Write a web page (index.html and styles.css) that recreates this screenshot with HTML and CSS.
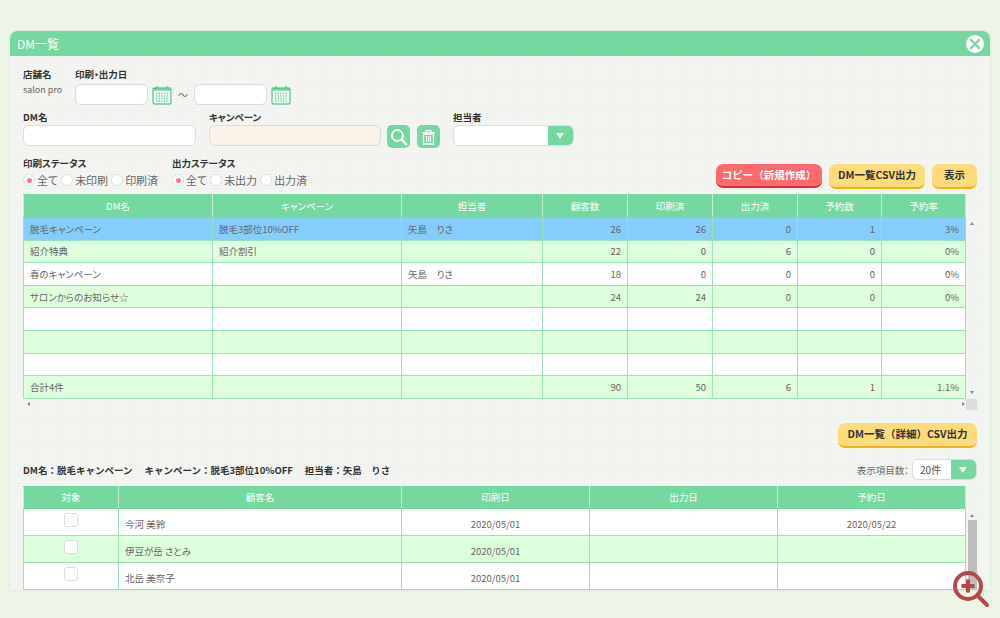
FILE: index.html
```html
<!DOCTYPE html>
<html lang="ja">
<head>
    <meta charset="UTF-8">
    <title>DM一覧</title>
    <link rel="stylesheet" href="styles.css">
</head>
<body>
    <svg class="defs" width="0" height="0">
        <symbol id="cal" viewBox="0 0 20 20">
            <rect x="1" y="3" width="18" height="16" rx="1.5" fill="#fff" stroke="#5fd193" stroke-width="1.4"/>
            <rect x="1" y="3" width="18" height="2.500" fill="#5fd193"/>
            <rect x="4" y="1" width="2" height="4" rx="1" fill="#5fd193"/>
            <rect x="14" y="1" width="2" height="4" rx="1" fill="#5fd193"/>
            <path d="M4 8.500h12M4 11h12M4 13.500h12M4 16h12" stroke="#5fd193" stroke-width="1.3" stroke-dasharray="1.4 1.2"/>
        </symbol>
    </svg>
    <div class="panel">
        <div class="titlebar">
            <span>DM一覧</span>
            <div class="close">
                <svg width="18" height="18" viewBox="0 0 18 18"><circle cx="9" cy="9" r="9" fill="#fff"/><path d="M5 5l8 8M13 5l-8 8" stroke="#74d8a0" stroke-width="2.4" stroke-linecap="round"/></svg>
            </div>
        </div>
        <div class="content">
            <div class="row row1">
                <div class="shop">
                    <div class="label">店舗名</div>
                    <div class="shopname">salon pro</div>
                </div>
                <div class="dates">
                    <div class="label">印刷・出力日</div>
                    <div class="daterow">
                        <input class="field w73" type="text">
                        <svg class="calicon" width="20" height="20"><use href="#cal"/></svg>
                        <span class="tilde">～</span>
                        <input class="field w73" type="text">
                        <svg class="calicon" width="20" height="20"><use href="#cal"/></svg>
                    </div>
                </div>
            </div>
            <div class="row row2">
                <div class="block">
                    <div class="label">DM名</div>
                    <input class="field w173" type="text">
                </div>
                <div class="block">
                    <div class="label">キャンペーン</div>
                    <div class="camprow">
                        <input class="field w172 readonly" type="text">
                        <div class="iconbtn first">
                            <svg width="18" height="18" viewBox="0 0 17 17"><circle cx="7" cy="7" r="5.2" fill="none" stroke="#fff" stroke-width="1.7"/><path d="M10.8 10.8l4.6 4.6" stroke="#fff" stroke-width="2.2" stroke-linecap="round"/></svg>
                        </div>
                        <div class="iconbtn">
                            <svg width="15" height="16" viewBox="0 0 15 16"><path d="M1 3.500h13M5 3V1.500h5V3" fill="none" stroke="#fff" stroke-width="1.2"/><path d="M2.500 5h10v10h-10z" fill="none" stroke="#fff" stroke-width="1.3"/><path d="M5.500 7v6M7.500 7v6M9.500 7v6" stroke="#fff" stroke-width="1.1"/></svg>
                        </div>
                    </div>
                </div>
                <div class="block staff">
                    <div class="label">担当者</div>
                    <div class="select w121">
                        <div class="selectval"></div>
                        <div class="selectarrow"></div>
                    </div>
                </div>
            </div>
            <div class="row row3">
                <div class="status">
                    <div class="label">印刷ステータス</div>
                    <div class="radios">
                        <span class="radio on"></span><span class="radiotxt">全て</span>
                        <span class="radio"></span><span class="radiotxt">未印刷</span>
                        <span class="radio"></span><span class="radiotxt">印刷済</span>
                    </div>
                </div>
                <div class="status">
                    <div class="label">出力ステータス</div>
                    <div class="radios">
                        <span class="radio on"></span><span class="radiotxt">全て</span>
                        <span class="radio"></span><span class="radiotxt">未出力</span>
                        <span class="radio"></span><span class="radiotxt">出力済</span>
                    </div>
                </div>
                <div class="buttons">
                    <div class="btn red">コピー（新規作成）</div>
                    <div class="btn yellow w96">DM一覧CSV出力</div>
                    <div class="btn yellow w45">表示</div>
                </div>
            </div>

            <div class="tablewrap">
                <table class="grid top">
                    <colgroup>
                        <col class="c189"><col class="c189"><col class="c141"><col class="c85"><col class="c85"><col class="c85"><col class="c84"><col class="c84">
                    </colgroup>
                    <thead>
                        <tr><th>DM名</th><th>キャンペーン</th><th>担当者</th><th>顧客数</th><th>印刷済</th><th>出力済</th><th>予約数</th><th>予約率</th></tr>
                    </thead>
                    <tbody>
                        <tr class="sel"><td>脱毛キャンペーン</td><td>脱毛3部位10%OFF</td><td>矢島　りさ</td><td class="num">26</td><td class="num">26</td><td class="num">0</td><td class="num">1</td><td class="num">3%</td></tr>
                        <tr class="alt"><td>紹介特典</td><td>紹介割引</td><td></td><td class="num">22</td><td class="num">0</td><td class="num">6</td><td class="num">0</td><td class="num">0%</td></tr>
                        <tr><td>春のキャンペーン</td><td></td><td>矢島　りさ</td><td class="num">18</td><td class="num">0</td><td class="num">0</td><td class="num">0</td><td class="num">0%</td></tr>
                        <tr class="alt"><td>サロンからのお知らせ☆</td><td></td><td></td><td class="num">24</td><td class="num">24</td><td class="num">0</td><td class="num">0</td><td class="num">0%</td></tr>
                        <tr><td></td><td></td><td></td><td></td><td></td><td></td><td></td><td></td></tr>
                        <tr class="alt"><td></td><td></td><td></td><td></td><td></td><td></td><td></td><td></td></tr>
                        <tr><td></td><td></td><td></td><td></td><td></td><td></td><td></td><td></td></tr>
                        <tr class="alt"><td>合計4件</td><td></td><td></td><td class="num">90</td><td class="num">50</td><td class="num">6</td><td class="num">1</td><td class="num">1.1%</td></tr>
                    </tbody>
                </table>
                <div class="vscroll">
                    <span class="arrow up"></span>
                    <span class="arrow down"></span>
                </div>
            </div>
            <div class="hscroll">
                <span class="arrow left"></span>
                <span class="arrow right"></span>
                <span class="corner"></span>
            </div>

            <div class="row detailbtn">
                <div class="btn yellow">DM一覧（詳細）CSV出力</div>
            </div>
            <div class="row inforow">
                <div class="info">
                    <span>DM名：脱毛キャンペーン</span>
                    <span>キャンペーン：脱毛3部位10%OFF</span>
                    <span>担当者：矢島　りさ</span>
                </div>
                <div class="perpage">
                    <span>表示項目数：</span>
                    <div class="select w65">
                        <div class="selectval">20件</div>
                        <div class="selectarrow"></div>
                    </div>
                </div>
            </div>
            <div class="tablewrap">
                <table class="grid bottom">
                    <colgroup>
                        <col class="c95"><col class="c283"><col class="c188"><col class="c188"><col class="c188">
                    </colgroup>
                    <thead>
                        <tr><th>対象</th><th>顧客名</th><th>印刷日</th><th>出力日</th><th>予約日</th></tr>
                    </thead>
                    <tbody>
                        <tr><td class="mid chk"><span class="check"></span></td><td class="name">今河 美鈴</td><td class="mid">2020/05/01</td><td></td><td class="mid">2020/05/22</td></tr>
                        <tr class="alt"><td class="mid chk"><span class="check"></span></td><td class="name">伊豆が岳 さとみ</td><td class="mid">2020/05/01</td><td></td><td></td></tr>
                        <tr><td class="mid chk"><span class="check"></span></td><td class="name">北岳 美奈子</td><td class="mid">2020/05/01</td><td></td><td></td></tr>
                    </tbody>
                </table>
                <div class="vscroll">
                    <span class="arrow up"></span>
                    <span class="thumb"></span>
                </div>
            </div>
        </div>
    </div>
    <div class="zoomer">
        <svg width="38" height="38" viewBox="0 0 38 38"><circle cx="16" cy="16" r="13" fill="none" stroke="#b8474b" stroke-width="4"/><path d="M26 26l9 9" stroke="#b8474b" stroke-width="4" stroke-linecap="round"/><path d="M9.500 16h13M16 9.500v13" stroke="#b8474b" stroke-width="4"/></svg>
    </div>
</body>
</html>
```

FILE: styles.css
```css
* {
    box-sizing: border-box;
}
html, body {
    margin: 0;
    padding: 0;
    height: 618px;
    overflow: hidden;
}
body {
    position: relative;
    padding: 31px 10px 0;
    background-color: #edf5e6;
    font-family: "Noto Sans CJK JP", "Noto Sans", sans-serif;
    font-size: 9.500px;
    font-feature-settings: "palt";
    color: #666;
}
.defs {
    position: absolute;
}
.panel {
    height: 559px;
    overflow: hidden;
    border-radius: 8px 8px 0 0;
    background-color: #f0f2ee;
    background-image: repeating-linear-gradient(0deg, rgba(255, 255, 255, 0.25) 0 1px, transparent 1px 3px), repeating-linear-gradient(90deg, rgba(255, 255, 255, 0.25) 0 1px, transparent 1px 3px);
    box-shadow: 0 0 3px #c9e6c9;
}
.titlebar {
    display: flex;
    justify-content: space-between;
    align-items: center;
    height: 25px;
    padding: 0 6px 0 7px;
    background-color: #74d8a0;
    color: #fff;
    font-size: 12px;
}
.close {
    display: flex;
}
.content {
    padding: 0 13px;
}
.row {
    display: flex;
}
.label {
    height: 14px;
    line-height: 14px;
    font-weight: bold;
    font-size: 9.500px;
    color: #333;
}
.row1 {
    padding-top: 11px;
    height: 54px;
}
.shop {
    width: 52px;
}
.shopname {
    margin-top: 2px;
    font-size: 9px;
    line-height: 14px;
}
.daterow {
    display: flex;
    align-items: center;
    margin-top: 3px;
}
.field {
    display: block;
    height: 21px;
    border: 1px solid #dcdcdc;
    border-radius: 6px;
    background-color: #fff;
    padding: 0;
}
.w73 { width: 73px; }
.w173 { width: 173px; }
.w172 { width: 172px; }
.readonly {
    background-color: #fbf2e8;
}
.calicon {
    margin-left: 4px;
}
.tilde {
    width: 22px;
    text-align: center;
    font-size: 10px;
}
.row2 {
    height: 46px;
}
.block {
    margin-right: 13px;
}
.block .label {
    margin-bottom: 1px;
}
.camprow {
    display: flex;
}
.iconbtn {
    display: flex;
    align-items: center;
    justify-content: center;
    width: 23px;
    height: 23px;
    margin-left: 7px;
    border-radius: 5px;
    background-color: #74d8a0;
}
.iconbtn.first {
    margin-left: 6px;
}
.select {
    display: flex;
    height: 21px;
    border: 1px solid #dcdcdc;
    border-radius: 6px;
    overflow: hidden;
    background-color: #fff;
}
.w121 { width: 121px; }
.w65 { width: 65px; }
.selectval {
    flex: 1;
    line-height: 19px;
    padding-left: 7px;
    font-size: 10px;
    color: #555;
}
.selectarrow {
    position: relative;
    width: 25px;
    background-color: #74d8a0;
}
.selectarrow::after {
    content: "";
    position: absolute;
    left: 8px;
    top: 7px;
    border-left: 4.500px solid transparent;
    border-right: 4.500px solid transparent;
    border-top: 6px solid #fff;
}
.row3 {
    height: 38px;
}
.status {
    width: 149px;
}
.radios {
    display: flex;
    align-items: center;
    margin-top: 3px;
    height: 14px;
}
.radio {
    position: relative;
    display: inline-block;
    width: 12px;
    height: 12px;
    margin-right: 2px;
    border: 1px solid #e0e0e0;
    border-radius: 50%;
    background-color: #fff;
}
.radio.on::after {
    content: "";
    position: absolute;
    left: 2.500px;
    top: 2.500px;
    width: 5px;
    height: 5px;
    border-radius: 50%;
    background-color: #fb7a85;
}
.radiotxt {
    margin-right: 3px;
    font-size: 11px;
}
.buttons {
    display: flex;
    gap: 7px;
    margin-left: auto;
    margin-top: 8px;
}
.btn {
    height: 25px;
    line-height: 22px;
    padding: 0;
    border-radius: 7px;
    font-weight: bold;
    font-size: 10.500px;
    font-feature-settings: normal;
    text-align: center;
    white-space: nowrap;
}
.btn.red {
    background-color: #fc6a6f;
    border-bottom: 2px solid #db2e36;
    color: #fff;
    width: 106px;
    height: 24px;
}
.btn.yellow {
    background-color: #fedb7c;
    border-bottom: 2px solid #f5b311;
    color: #333;
}
.w96 { width: 96px; }
.w45 { width: 45px; }
.tablewrap {
    display: flex;
}
.grid {
    table-layout: fixed;
    width: 942px;
    border-collapse: collapse;
    background-color: #fff;
}
.c189 { width: 189px; }
.c141 { width: 141px; }
.c85 { width: 85px; }
.c84 { width: 84px; }
.c95 { width: 95px; }
.c283 { width: 283px; }
.c188 { width: 188px; }
.grid th {
    height: 23px;
    padding: 0;
    background-color: #74d8a0;
    border: 1px solid #74d8a0;
    border-left-color: #c4eed6;
    border-right-color: #c4eed6;
    color: #fff;
    font-weight: normal;
    font-size: 9.500px;
}
.bottom th {
    height: 22px;
}
.grid td {
    padding: 0 6px;
    border: 1px solid #98e3b7;
    font-size: 9.500px;
    white-space: nowrap;
    overflow: hidden;
}
.top td {
    height: 22.600px;
}
.bottom td {
    height: 27px;
    padding-top: 4px;
}
.grid .num {
    text-align: right;
}
.grid .mid {
    text-align: center;
}
.grid .chk {
    padding-top: 0;
}
.grid .alt {
    background-color: #deffdc;
}
.grid .sel {
    background-color: #85cdfb;
}
.check {
    display: block;
    width: 14px;
    height: 14px;
    margin: 0 auto 4px;
    border: 1px solid #dcdcdc;
    border-radius: 3px;
    background-color: #fff;
}
.vscroll {
    position: relative;
    flex: 1;
}
.arrow {
    position: absolute;
    width: 0;
    height: 0;
}
.arrow.up {
    left: 4px;
    top: 28px;
    border-left: 2px solid transparent;
    border-right: 2px solid transparent;
    border-bottom: 3px solid #888;
}
.arrow.down {
    left: 4px;
    bottom: 5px;
    border-left: 2px solid transparent;
    border-right: 2px solid transparent;
    border-top: 3px solid #888;
}
.thumb {
    position: absolute;
    left: 2px;
    top: 34px;
    width: 9px;
    height: 90px;
    background-color: #bdbdbd;
}
.hscroll {
    position: relative;
    height: 11px;
}
.arrow.left {
    left: 4px;
    top: 3px;
    border-top: 2px solid transparent;
    border-bottom: 2px solid transparent;
    border-right: 3px solid #888;
}
.arrow.right {
    left: 939px;
    top: 3px;
    border-top: 2px solid transparent;
    border-bottom: 2px solid transparent;
    border-left: 3px solid #888;
}
.corner {
    position: absolute;
    left: 943px;
    top: 0;
    width: 11px;
    height: 11px;
    background-color: #dcdcdc;
}
.detailbtn {
    justify-content: flex-end;
    padding-top: 13px;
}
.detailbtn .btn {
    width: 139px;
}
.inforow {
    justify-content: space-between;
    align-items: center;
    height: 38px;
    padding-top: 6px;
}
.info {
    display: flex;
    gap: 12px;
    font-weight: bold;
    font-feature-settings: normal;
    color: #333;
}
.perpage {
    display: flex;
    align-items: center;
    gap: 3px;
}
.zoomer {
    position: absolute;
    left: 952px;
    top: 570px;
}
```
